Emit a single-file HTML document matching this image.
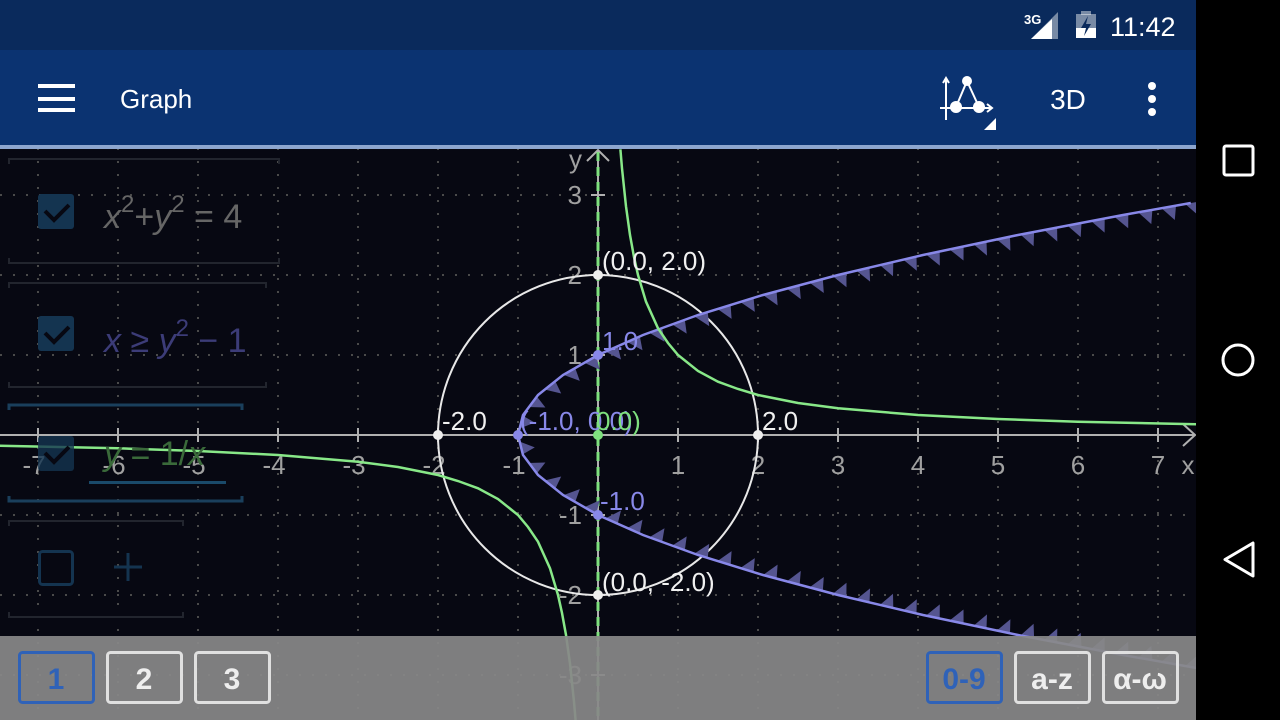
<!DOCTYPE html>
<html><head><meta charset="utf-8"><style>
body{margin:0;width:1280px;height:720px;overflow:hidden;background:#000;font-family:"Liberation Sans",sans-serif}
svg{position:absolute;left:0;top:0}
</style></head><body>
<svg width="1280" height="720" viewBox="0 0 1280 720" xmlns="http://www.w3.org/2000/svg" font-family="Liberation Sans, sans-serif">
<defs><clipPath id="gc"><rect x="0" y="148" width="1196" height="572"/></clipPath></defs>
<rect x="0" y="0" width="1280" height="720" fill="#000"/>
<rect x="0" y="148" width="1196" height="572" fill="#070812"/>
<g clip-path="url(#gc)">
<g stroke="#4a4a4a" stroke-width="2" stroke-dasharray="2 11">
<line x1="38" y1="148" x2="38" y2="720"/><line x1="118" y1="148" x2="118" y2="720"/><line x1="198" y1="148" x2="198" y2="720"/><line x1="278" y1="148" x2="278" y2="720"/><line x1="358" y1="148" x2="358" y2="720"/><line x1="438" y1="148" x2="438" y2="720"/><line x1="518" y1="148" x2="518" y2="720"/><line x1="678" y1="148" x2="678" y2="720"/><line x1="758" y1="148" x2="758" y2="720"/><line x1="838" y1="148" x2="838" y2="720"/><line x1="918" y1="148" x2="918" y2="720"/><line x1="998" y1="148" x2="998" y2="720"/><line x1="1078" y1="148" x2="1078" y2="720"/><line x1="1158" y1="148" x2="1158" y2="720"/>
<line x1="0" y1="195" x2="1196" y2="195"/><line x1="0" y1="275" x2="1196" y2="275"/><line x1="0" y1="355" x2="1196" y2="355"/><line x1="0" y1="515" x2="1196" y2="515"/><line x1="0" y1="595" x2="1196" y2="595"/><line x1="0" y1="675" x2="1196" y2="675"/>
</g>
<g stroke="#b0b0b0" stroke-width="2" fill="none">
<line x1="0" y1="435" x2="1194" y2="435"/>
<polyline points="1183,424 1195,435 1183,446"/>
<line x1="598" y1="150" x2="598" y2="720"/>
<polyline points="587,161 598,150 609,161"/>
<path d="M38 428v14M118 428v14M198 428v14M278 428v14M358 428v14M438 428v14M518 428v14M678 428v14M758 428v14M838 428v14M918 428v14M998 428v14M1078 428v14M1158 428v14M591 195h14M591 275h14M591 355h14M591 515h14M591 595h14M591 675h14"/>
</g>
<g fill="#a0a0a0" font-size="26" text-anchor="middle">
<text x="34" y="474">-7</text><text x="114" y="474">-6</text><text x="194" y="474">-5</text><text x="274" y="474">-4</text><text x="354" y="474">-3</text><text x="434" y="474">-2</text><text x="514" y="474">-1</text><text x="678" y="474">1</text><text x="758" y="474">2</text><text x="838" y="474">3</text><text x="918" y="474">4</text><text x="998" y="474">5</text><text x="1078" y="474">6</text><text x="1158" y="474">7</text><text x="1188" y="474">x</text>
</g>
<g fill="#a0a0a0" font-size="26" text-anchor="end">
<text x="582" y="168">y</text><text x="582" y="204">3</text><text x="582" y="284">2</text><text x="582" y="364">1</text><text x="582" y="524">-1</text><text x="582" y="604">-2</text><text x="582" y="684">-3</text>
</g>
<line x1="598" y1="152" x2="598" y2="720" stroke="#7ee07e" stroke-width="3" stroke-dasharray="9 6"/>
<circle cx="598" cy="435" r="160" fill="none" stroke="#e8e8e8" stroke-width="2"/>
<g id="hatch" fill="#555590"></g>
<polyline fill="none" stroke="#8888e8" stroke-width="2.5" points="1190.8,203 1123,215 1018,235 923,255 838,275 763,295 698,315 643,335 598,355 563,375 538,395 523,415 518,435 523,455 538,475 563,495 598,515 643,535 698,555 763,575 838,595 923,615 1018,635 1123,655 1190.8,667 1220,672"/>
<g fill="none" stroke="#88e888" stroke-width="2.5">
<polyline points="620.4,149.3 622,168.3 626,206.4 630,235 634,257 638,275 646,301.7 658,328.3 668,343 678,355 698,371 718,381.7 738,389 758,395 798,403 838,408.3 918,415 998,419 1078,421.7 1198,424.3"/>
<polyline points="-2,445.7 118,448.3 198,451 278,455 358,461.7 398,467 438,475 458,481 478,488.3 498,499 518,515 528,527 538,541.7 550,568.3 558,595 562,613 566,635 570,663.6 574,701.7 575.6,720.7"/>
</g>
</g>
<g fill="#eeeeee"><circle cx="598" cy="275" r="5"/><circle cx="598" cy="595" r="5"/><circle cx="438" cy="435" r="5"/><circle cx="758" cy="435" r="5"/></g>
<g fill="#8888e8"><circle cx="518" cy="435" r="5"/><circle cx="598" cy="355" r="5"/><circle cx="598" cy="515" r="5"/></g>
<circle cx="598" cy="435" r="5" fill="#7ee07e"/>
<g font-size="26" fill="#f0f0f0">
<text x="602" y="270">(0.0, 2.0)</text><text x="602" y="591">(0.0, -2.0)</text><text x="442" y="430">-2.0</text><text x="762" y="430">2.0</text>
</g>
<g font-size="26" fill="#8888e8"><text x="602" y="350">1.0</text><text x="600" y="510">-1.0</text><text x="520" y="430">(-1.0, 0.0)</text></g>
<text x="596" y="430" font-size="26" fill="#7ee07e">0.0)</text>
<g fill="none" stroke="#22252e" stroke-width="2">
<path d="M9 164v-5h270v5M9 258v5h270v-5"/>
<path d="M9 288v-5h257v5M9 382v5h257v-5"/>
<path d="M9 526v-5h174v5M9 612v5h174v-5"/>
</g>
<path d="M9 410v-5h233v5M9 496v5h233v-5" fill="none" stroke="#1a3f5c" stroke-width="3"/>
<g fill="#143450"><rect x="38" y="194" width="36" height="35" rx="3"/><rect x="38" y="316" width="36" height="35" rx="3"/><rect x="38" y="436" width="36" height="35" rx="3" opacity=".8"/></g>
<g fill="none" stroke="#070812" stroke-width="4"><polyline points="45,211 54,220 69,205"/><polyline points="45,333 54,342 69,327"/><polyline points="45,453 54,462 69,447"/></g>
<rect x="39.5" y="551.5" width="33" height="33" rx="3" fill="none" stroke="#143450" stroke-width="3"/>
<path d="M114 567h28M128 553v28" stroke="#143450" stroke-width="3"/>
<text x="104" y="228" font-size="34" fill="#666"><tspan font-style="italic">x</tspan><tspan dy="-16" font-size="24">2</tspan><tspan dy="16">+</tspan><tspan font-style="italic">y</tspan><tspan dy="-16" font-size="24">2</tspan><tspan dy="16"> = 4</tspan></text>
<text x="104" y="352" font-size="34" fill="#3c3c78"><tspan font-style="italic">x</tspan><tspan> ≥ </tspan><tspan font-style="italic">y</tspan><tspan dy="-16" font-size="24">2</tspan><tspan dy="16"> − 1</tspan></text>
<text x="104" y="465" font-size="34" fill="#3a6a3a"><tspan font-style="italic">y</tspan> = 1/<tspan font-style="italic">x</tspan></text>
<rect x="89" y="481" width="137" height="3" fill="#1a4a6a"/>
<rect x="0" y="636" width="1196" height="84" fill="#888" opacity="0.93"/>
<g fill="none" stroke-width="3">
<rect x="19.5" y="652.5" width="74" height="50" rx="3" stroke="#2f62b8"/>
<rect x="107.5" y="652.5" width="74" height="50" rx="3" stroke="#e0e0e0"/>
<rect x="195.5" y="652.5" width="74" height="50" rx="3" stroke="#e0e0e0"/>
<rect x="927.5" y="652.5" width="74" height="50" rx="3" stroke="#2f62b8"/>
<rect x="1015.5" y="652.5" width="74" height="50" rx="3" stroke="#e0e0e0"/>
<rect x="1103.5" y="652.5" width="74" height="50" rx="3" stroke="#e0e0e0"/>
</g>
<g font-size="30" font-weight="bold" text-anchor="middle">
<text x="56" y="689" fill="#2f62b8">1</text><text x="144" y="689" fill="#eee">2</text><text x="232" y="689" fill="#eee">3</text>
<text x="964" y="689" fill="#2f62b8">0-9</text><text x="1052" y="689" fill="#eee">a-z</text><text x="1140" y="689" fill="#eee">α-ω</text>
</g>
<rect x="0" y="0" width="1196" height="50" fill="#0a2a5c"/>
<rect x="0" y="50" width="1196" height="95" fill="#0b3371"/>
<rect x="0" y="145" width="1196" height="4" fill="#8da6cf"/>
<g fill="#fff"><rect x="38" y="84" width="37" height="4"/><rect x="38" y="97" width="37" height="4"/><rect x="38" y="108" width="37" height="4"/></g>
<text x="120" y="108" font-size="26" fill="#fff">Graph</text>
<text x="1068" y="109" font-size="28" fill="#fff" text-anchor="middle">3D</text>
<g fill="#fff"><circle cx="1152" cy="86" r="4"/><circle cx="1152" cy="99" r="4"/><circle cx="1152" cy="112" r="4"/></g>
<g stroke="#fff" stroke-width="2" fill="none"><path d="M946 78v42M940 108h52M987 104l5 4-5 4M943 83l3-5 3 5"/><path d="M967 81l-11 26M967 81l12 26"/></g>
<g fill="#fff"><circle cx="967" cy="81" r="5"/><circle cx="956" cy="107" r="6"/><circle cx="979" cy="107" r="6"/><path d="M996 118v12h-12z"/></g>
<text x="1110" y="36" font-size="27" fill="#fff">11:42</text>
<rect x="1076" y="14" width="20" height="24" fill="#fff" opacity=".45"/><rect x="1081" y="11" width="10" height="4" fill="#fff" opacity=".45"/>
<path d="M1076 28h20v10h-20z" fill="#fff"/><path d="M1088 16l-7 12h5l-2 8 7-12h-5z" fill="#0a2a5c"/>
<path d="M1058 12v27h-27z" fill="#fff" opacity=".45"/><path d="M1052 19v20h-21z" fill="#fff"/>
<text x="1024" y="24" font-size="13" font-weight="bold" fill="#fff">3G</text>
<g fill="none" stroke="#fff" stroke-width="3"><rect x="1224" y="146" width="29" height="29" rx="2"/><circle cx="1238" cy="360" r="15"/><path d="M1253 543v33l-28-16.5z" stroke-linejoin="round"/></g>
</svg>
<script>
(function(){
var g=document.getElementById('hatch');var d='';
function P(y){return [518+80*y*y,435-80*y];}
function build(sign){
 var prev=P(0);var s=0,list=[[0,prev[0],prev[1]]];
 for(var t=0.002;t<=3.0;t+=0.002){var p=P(t);s+=Math.hypot(p[0]-prev[0],p[1]-prev[1]);list.push([s,p[0],p[1]]);prev=p;}
 function at(L){for(var i=1;i<list.length;i++){if(list[i][0]>=L){return list[i];}}return null;}
 for(var L=6;L<1100;L+=24){
  var a=at(L),b=at(L+14),m=at(L+11);if(!a||!b||!m)break;
  var dx=b[1]-a[1],dy=b[2]-a[2],n=Math.hypot(dx,dy);
  var nx=dy/n,ny=-dx/n;
  if(nx<0){nx=-nx;ny=-ny;}
  var tx=m[1]+nx*14,ty=m[2]+ny*14;
  function f(x,y){return x.toFixed(1)+','+(sign>0?y:870-y).toFixed(1);}
  d+='M'+f(a[1],a[2])+'L'+f(b[1],b[2])+'L'+f(tx,ty)+'Z';
 }
}
build(1);build(-1);
var p=document.createElementNS('http://www.w3.org/2000/svg','path');p.setAttribute('d',d);g.appendChild(p);
})();
</script>
</body></html>
